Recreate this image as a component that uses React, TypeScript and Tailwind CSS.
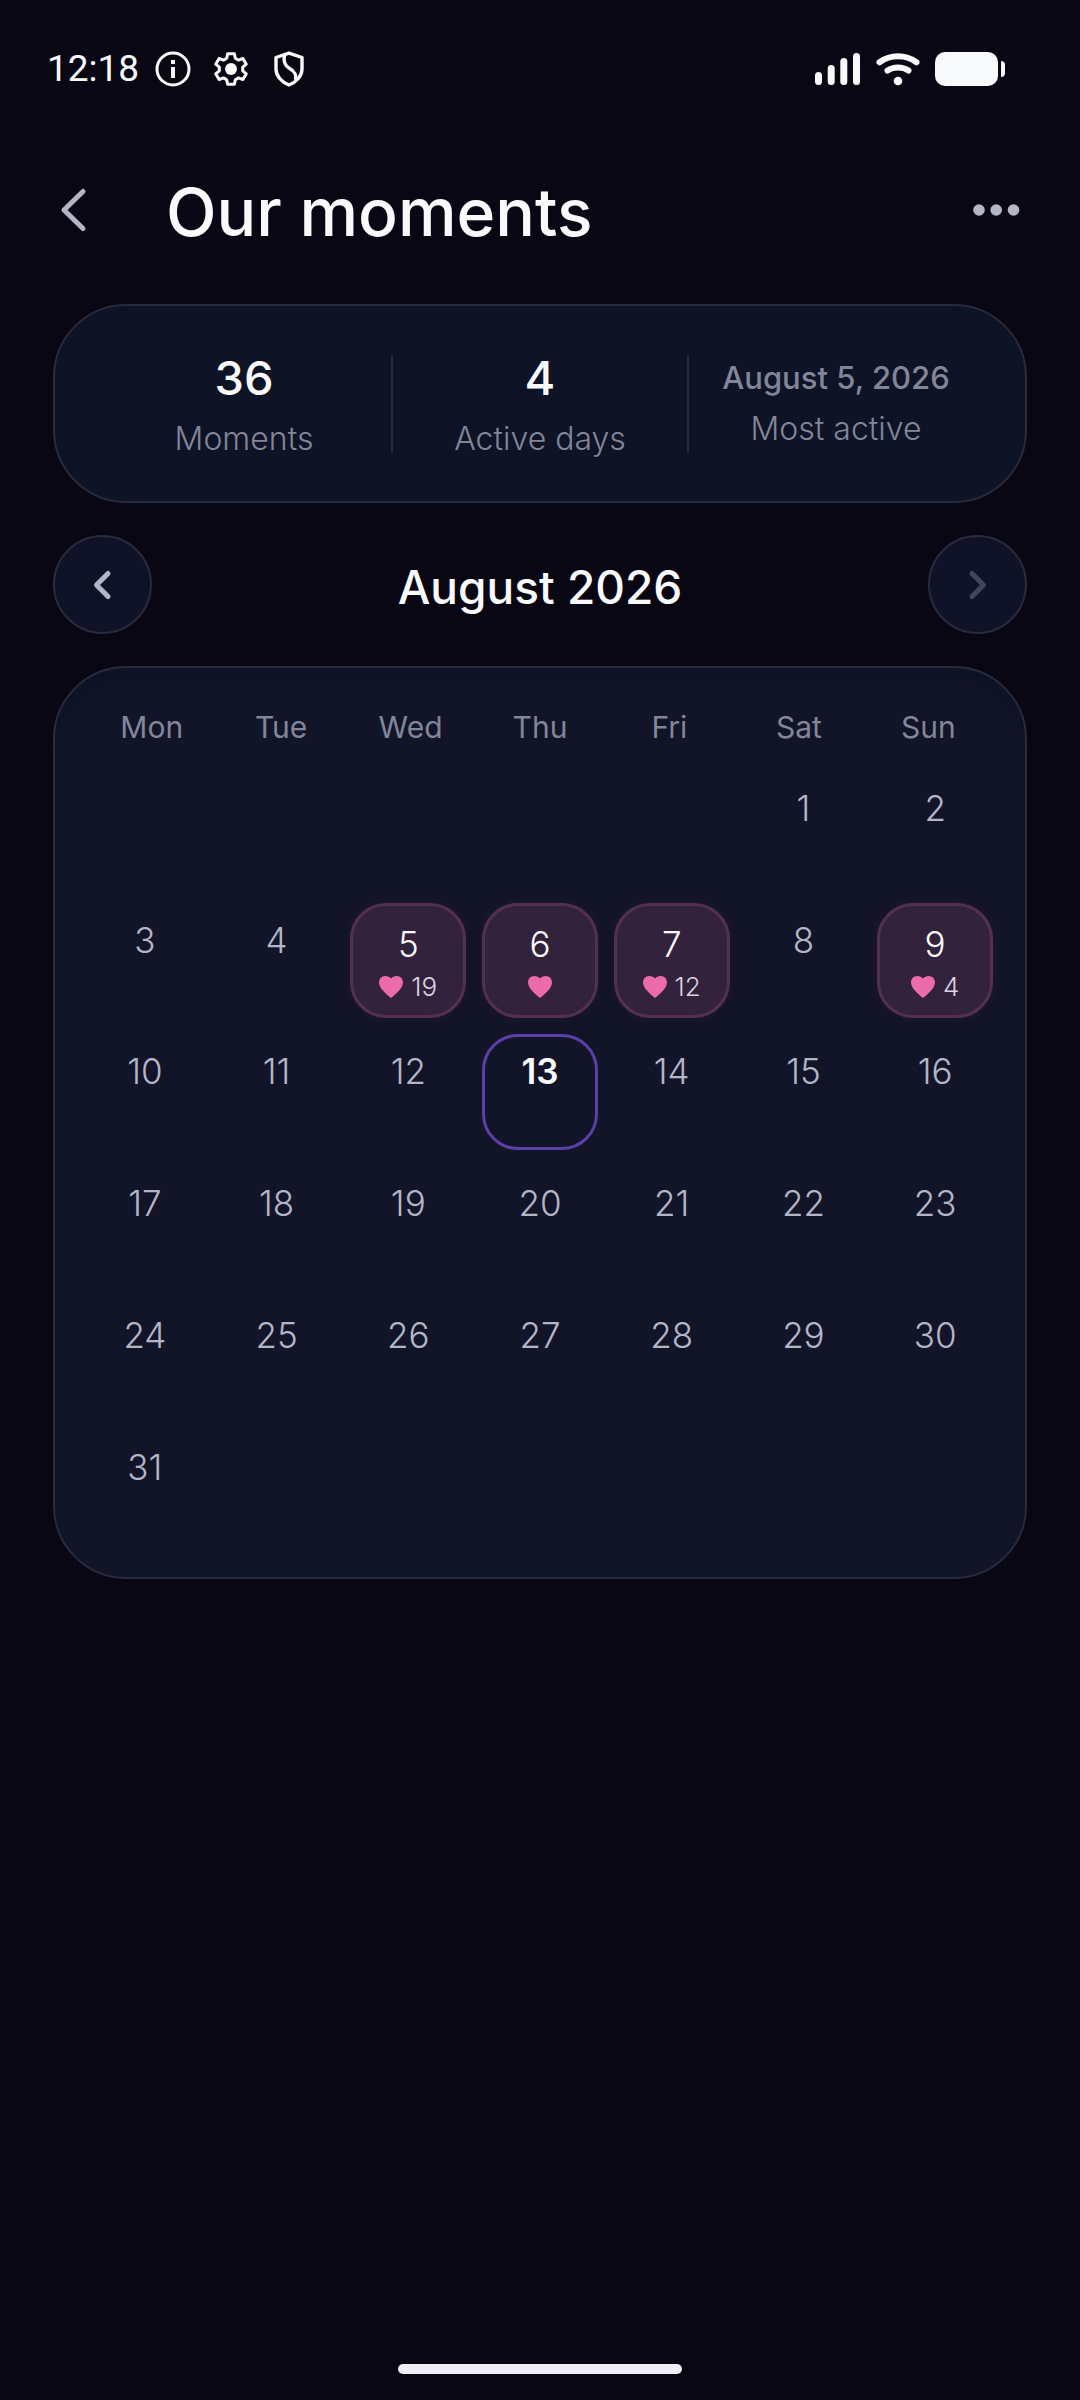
import { PropsWithChildren } from "react";

interface Day {
  day: number;
  liked?: boolean;
  count?: number;
  today?: boolean;
}

interface StatProps {
  label: string;
}

const weekdays = ["Mon", "Tue", "Wed", "Thu", "Fri", "Sat", "Sun"];

// days with at least one moment, the count is hidden when there is only one
const moments: Record<number, number> = { 5: 19, 6: 1, 7: 12, 9: 4 };

// August 2026 starts on a Saturday
const emptyDays = [0, 1, 2, 3, 4];

const days: Day[] = Array.from({ length: 31 }, (_, i) => ({
  day: i + 1,
  liked: moments[i + 1] !== undefined,
  count: moments[i + 1] > 1 ? moments[i + 1] : undefined,
  today: i + 1 === 13,
}));

function StatusBar() {
  return (
    <div className="flex h-[138px] items-center justify-between pl-[47px] pr-[75px] text-[#f8f9fb]">
      <div className="flex items-center">
        <span className="font-[Roboto,sans-serif] text-[37px] leading-[44px]">12:18</span>
        <svg className="ml-4 size-9" viewBox="0 0 36 36" fill="none" stroke="currentColor">
          <circle cx="18" cy="18" r="16" strokeWidth="3" />
          <path d="M18 16v11M18 9v4" strokeWidth="4" />
        </svg>
        <svg className="ml-[22px] size-9" viewBox="0 0 36 36" fill="none" stroke="currentColor">
          <path
            d="M14.6 2.7h6.8l.9 4.6 3.2 1.8 4.4-1.6 3.4 5.7-3.6 3v3.6l3.6 3-3.4 5.7-4.4-1.6-3.2 1.8-.9 4.6h-6.8l-.9-4.6-3.2-1.8-4.4 1.6-3.4-5.7 3.6-3v-3.6l-3.6-3 3.4-5.7 4.4 1.6 3.2-1.8z"
            strokeWidth="3"
            strokeLinejoin="round"
          />
          <circle cx="18" cy="18" r="6" fill="currentColor" stroke="none" />
        </svg>
        <svg className="ml-[22px] size-9" viewBox="0 0 36 36" fill="none" stroke="currentColor">
          <path
            d="M18 2.2 31 6.500v11.500c0 7-5.500 13-13 16-7.500-3-13-9-13-16V6.500z"
            strokeWidth="3.400"
            strokeLinejoin="round"
          />
          <path d="M13.500 4.500c-1.500 6 0 9.500 4.500 12.500 5 3 8 6 6.500 12" strokeWidth="3.400" />
        </svg>
      </div>
      <div className="flex items-center">
        <svg className="h-[34px] w-[46px]" viewBox="0 0 46 34" fill="currentColor">
          <rect x="0" y="20" width="7" height="13" rx="3.500" />
          <rect x="12.700" y="13" width="7" height="20" rx="3.500" />
          <rect x="25.300" y="6" width="7" height="27" rx="3.500" />
          <rect x="38" y="1" width="7" height="32" rx="3.500" />
        </svg>
        <svg className="ml-[15px] h-[34px] w-[44px]" viewBox="0 0 44 34" fill="none" stroke="currentColor">
          <path d="M3.500 10.300C14.500 2.300 29.500 2.300 40.500 10.300" strokeWidth="6" strokeLinecap="round" />
          <path d="M11.500 18.600C17.500 14.600 26.500 14.600 32.500 18.600" strokeWidth="6" strokeLinecap="round" />
          <circle cx="22" cy="29" r="4.300" fill="currentColor" stroke="none" />
        </svg>
        <svg className="ml-[15px] h-[34px] w-[70px]" viewBox="0 0 70 34" fill="currentColor">
          <rect x="0" y="0" width="63" height="34" rx="10" />
          <path d="M66 9c2.700 0 4 1.500 4 4v8c0 2.500-1.300 4-4 4z" />
        </svg>
      </div>
    </div>
  );
}

function Header() {
  return (
    <header className="flex h-[144px] items-center pl-[53px] pr-[53px]">
      <button aria-label="Back" className="text-[#b3b6c6]">
        <svg className="h-12 w-10" viewBox="0 0 40 48" fill="none" stroke="currentColor">
          <path d="M30 5.500 11 24l19 18.500" strokeWidth="5" strokeLinecap="round" strokeLinejoin="round" />
        </svg>
      </button>
      <h1 className="ml-[73px] flex-1 pt-1 text-[66px] font-medium leading-[80px] text-[#f8f9fb]">Our moments</h1>
      <button aria-label="More" className="text-[#b3b6c6]">
        <svg className="h-12 w-16" viewBox="0 0 64 48" fill="currentColor">
          <circle cx="16" cy="24" r="5.800" />
          <circle cx="33.200" cy="24" r="5.800" />
          <circle cx="50.500" cy="24" r="5.800" />
        </svg>
      </button>
    </header>
  );
}

function Stat(props: PropsWithChildren<StatProps>) {
  const { label, children } = props;
  return (
    <div className="flex flex-1 flex-col items-center justify-center gap-[7px]">
      {children}
      <p className="text-[32px] font-light leading-[44px]">{label}</p>
    </div>
  );
}

function Stats() {
  return (
    <section className="mx-[53px] mt-[22px] flex h-[199px] items-center rounded-[73px] border-2 border-[#282b3d] bg-[#0e1326] px-[42px] text-[#828699]">
      <Stat label="Moments">
        <p className="text-[47px] font-medium leading-[64px] text-[#f8f9fb]">36</p>
      </Stat>
      <div className="h-24 w-[2px] bg-[#282b3d]" />
      <Stat label="Active days">
        <p className="text-[47px] font-medium leading-[64px] text-[#f8f9fb]">4</p>
      </Stat>
      <div className="h-24 w-[2px] bg-[#282b3d]" />
      <Stat label="Most active">
        <p className="text-[31px] font-medium leading-[44px]">August 5, 2026</p>
      </Stat>
    </section>
  );
}

function MonthNav() {
  return (
    <nav className="mx-[53px] mt-8 flex items-center justify-between">
      <button
        aria-label="Previous month"
        className="flex size-[99px] items-center justify-center rounded-full border-2 border-[#282b3d] bg-[#101328] text-[#b3b6c6]"
      >
        <svg className="size-10" viewBox="0 0 40 40" fill="none" stroke="currentColor">
          <path d="M25 8.500 13.500 20 25 31.500" strokeWidth="5" strokeLinecap="round" strokeLinejoin="round" />
        </svg>
      </button>
      <h2 className="pt-1 text-[46px] font-medium leading-[64px] text-[#f8f9fb]">August 2026</h2>
      <button
        aria-label="Next month"
        disabled
        className="flex size-[99px] items-center justify-center rounded-full border-2 border-[#282b3d] bg-[#101328] text-[#43465a]"
      >
        <svg className="size-10" viewBox="0 0 40 40" fill="none" stroke="currentColor">
          <path d="M15 8.500 26.500 20 15 31.500" strokeWidth="5" strokeLinecap="round" strokeLinejoin="round" />
        </svg>
      </button>
    </nav>
  );
}

function DayCell({ day, liked, count, today }: Day) {
  if (liked) {
    return (
      <button className="flex aspect-square flex-col items-center rounded-[36px] border-[3px] border-[#53304e] bg-[#33223b] pt-4 text-[#f8f9fb] shadow-[0_0_12px_#1f1a33]">
        <span className="text-[35px] font-light leading-[44px]">{day}</span>
        <span className="mt-[5px] flex h-8 items-center gap-2 text-[26px] font-light leading-8 text-[#dcd3e4]">
          <svg className="h-[22px] w-6" viewBox="0 0 24 22" fill="#ec6ba9">
            <path d="M12 22C10.500 20.500 0 13.500 0 6.500 0 2.800 2.700 0 6.300 0 8.800 0 10.800 1 12 2.400 13.200 1 15.200 0 17.700 0 21.300 0 24 2.800 24 6.500 24 13.500 13.500 20.500 12 22Z" />
          </svg>
          {count}
        </span>
      </button>
    );
  }
  return (
    <button
      className={`flex aspect-square flex-col items-center rounded-[36px] border-[3px] pt-3 text-[35px] leading-[44px] ${
        today ? "border-[#5c3fa8] font-semibold text-[#f8f9fb]" : "border-transparent font-light text-[#b3b6c6]"
      }`}
    >
      {day}
    </button>
  );
}

function Calendar() {
  return (
    <section className="mx-[53px] mt-8 rounded-[73px] border-2 border-[#282b3d] bg-[#121428] px-8 pb-8 pt-6 shadow-[inset_0_14px_14px_-8px_#0d1325]">
      <div className="mb-2 grid h-[71px] grid-cols-7 items-center text-center text-[30px] font-normal text-[#828699]">
        {weekdays.map((name) => (
          <span key={name}>{name}</span>
        ))}
      </div>
      <div className="grid grid-cols-7 gap-4">
        {emptyDays.map((item) => (
          <span key={item} />
        ))}
        {days.map((item) => (
          <DayCell key={item.day} {...item} />
        ))}
      </div>
    </section>
  );
}

export default function App() {
  return (
    <div className="flex min-h-screen flex-col bg-[#090713] font-[Inter,sans-serif]">
      <StatusBar />
      <Header />
      <main>
        <Stats />
        <MonthNav />
        <Calendar />
      </main>
      <footer className="mt-auto flex justify-center pb-[26px] pt-10">
        <div className="h-[10px] w-[284px] rounded-full bg-[#f0edf5]" />
      </footer>
    </div>
  );
}
